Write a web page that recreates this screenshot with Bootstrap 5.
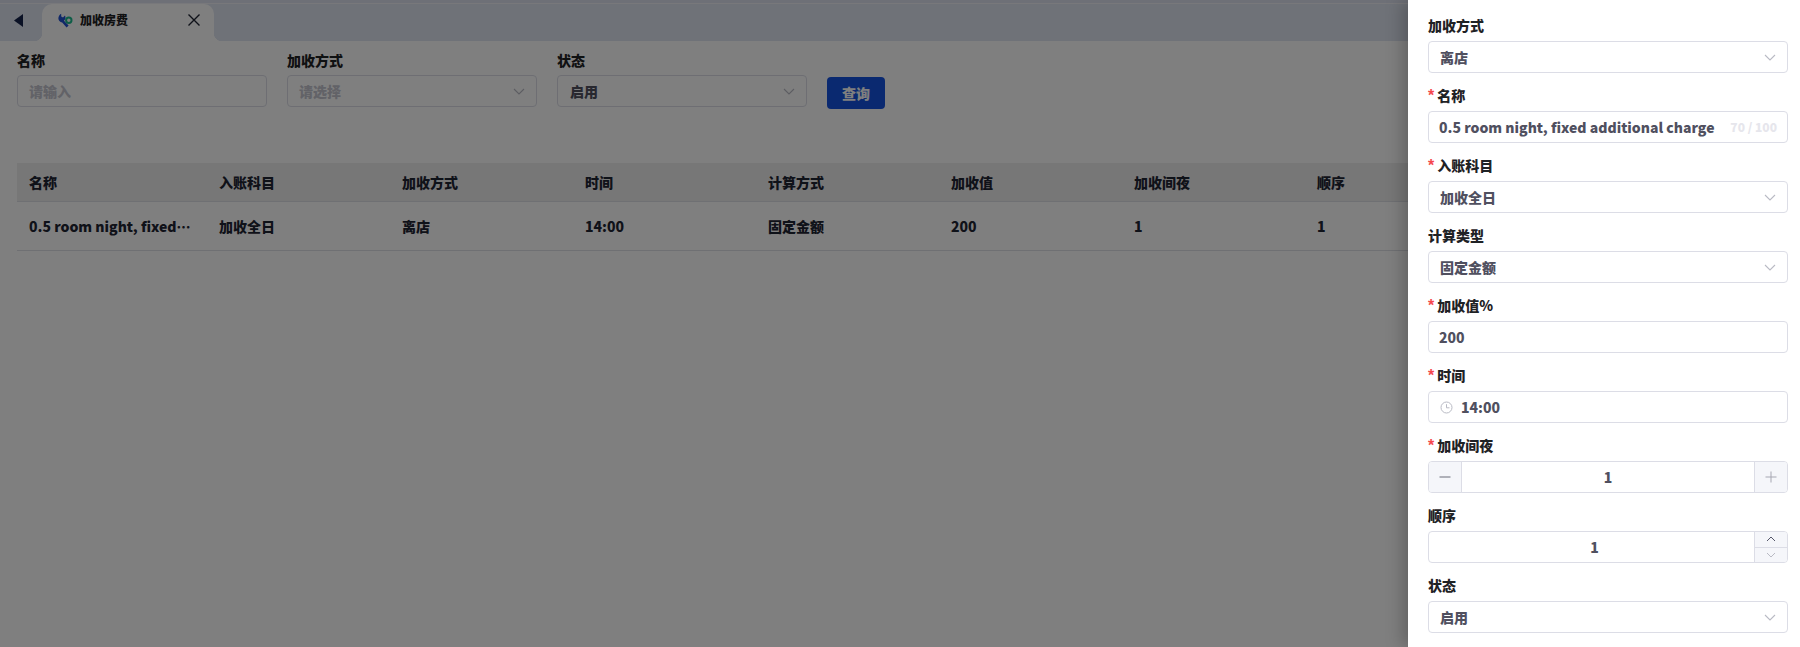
<!doctype html>
<html lang="zh-CN">
<head>
<meta charset="utf-8">
<title>加收房费</title>
<link rel="stylesheet" href="https://cdn.jsdelivr.net/npm/bootstrap@5.3.0/dist/css/bootstrap.min.css">
<style>
html,body{height:647px;overflow:hidden}
body{font-family:"Noto Sans CJK SC","Noto Sans",sans-serif;font-size:14px;font-weight:900;color:#1f2225;background:#fff}
.stage{position:relative;width:1800px;height:647px;overflow:hidden;background:#fff}
.tabstrip{height:3px;background:#dde1ee}
.tabbar{height:38px;background:#dfe4f1;border-top:1px solid #f0f1f6;padding-left:42px;position:relative}
.backicon{position:absolute;left:13px;top:10px}
.tabitem{width:172px;height:37px;background:#fff;border-radius:10px 10px 0 0;padding:0 13px 5px 16px;position:relative;font-size:12px;color:#1f2225}
.tabitem::before,.tabitem::after{content:"";position:absolute;bottom:0;width:8px;height:8px}
.tabitem::before{left:-8px;background:radial-gradient(circle at 0 0,transparent 8px,#fff 8.5px)}
.tabitem::after{right:-8px;background:radial-gradient(circle at 100% 0,transparent 8px,#fff 8.5px)}
.tabname{margin-left:7px}
.filterrow{padding:8px 17px 0;gap:20px}
.fcol{width:250px}
.flabel{height:22px;line-height:22px;margin-bottom:4px;font-size:14px}
.fbox{height:32px;border:1px solid #dcdde6;border-radius:4px;padding:0 11px;font-size:14px;line-height:20px;background:#fff}
.fbox.ph{color:#c4c5cf}
.fbox.val{color:#50505f;padding-left:12px}
.querybtn{width:58px;height:32px;margin-top:28px;padding:0;background:#1552e0;border:0;border-radius:4px;color:#fff;font-size:14px;font-weight:900;line-height:32px}
.datatable{width:1783px;margin:54px 0 0 17px;table-layout:fixed;border-collapse:collapse}
.datatable th,.datatable td{padding:0 12px;vertical-align:middle;font-size:14px;color:#1f2533;font-weight:900;border-bottom:1px solid #dfe0e6;background:#fff;box-shadow:none}
.datatable th{height:38px;background:#eeeeef;padding-top:1px}
.datatable td{height:49px;padding-top:2px}
.datatable td.firstcell{padding-right:14px}
.scrim{position:absolute;inset:0;background:rgba(0,0,0,.5)}
.sidepanel{position:absolute;top:0;right:0;bottom:0;width:392px;background:#fff;padding:15px 12px 0 20px;box-shadow:-6px 0 16px rgba(0,0,0,.22)}
.sfield{height:70px}
.slabel{height:21px;line-height:21px;margin-bottom:5px;font-size:14px;color:#1f2225;white-space:nowrap}
.reqmark{color:#f5484d;font-size:16px;line-height:1;margin-right:3px;font-family:"Liberation Sans",sans-serif}
.sbox{height:32px;border:1px solid #dcdde6;border-radius:4px;background:#fff;color:#50505f;font-size:14px;overflow:hidden}
.pad{padding:0 11px}
.inpad{padding:0 10px}
.cnt{color:#e6e6ec;font-size:12px}
.stepbtn{width:33px;background:#f5f6fa;height:100%}
.stepbtn.lft{border-right:1px solid #dcdde6}
.stepbtn.rgt{border-left:1px solid #dcdde6}
.stepcol{width:33px;border-left:1px solid #dcdde6;background:#f5f6fa;height:100%}
.stepcol>div{flex:1 1 0}
.stepcol>div:first-child{border-bottom:1px solid #dcdde6}
.numtxt{padding-left:6px}
</style>
</head>
<body>
<div class="stage">
  <div class="tabstrip"></div>
  <div class="tabbar d-flex">
    <svg class="backicon" width="10" height="13" viewBox="0 0 10 13"><path d="M10 0V13L1 6.500Z" fill="#14224a"/></svg>
    <div class="tabitem d-flex align-items-center">
      <svg width="15" height="15" viewBox="0 0 15 15" fill="none">
        <path d="M3.200.8V3.600L5 4.600 7 2.600C7.900 4.600 7.400 6.600 6 7.800L10.600 12.400 8.600 14.400 4.200 9.400C1.400 9.400-.3 6.400.6 4 1 2.600 2 1.400 3.200.8Z" fill="#2050d0"/>
        <circle cx="10.800" cy="7.300" r="2.700" stroke="#1dbb8e" stroke-width="2"/>
      </svg>
      <span class="tabname flex-grow-1">加收房费</span>
      <svg width="14" height="14" viewBox="0 0 14 14"><path d="M1.500 1.500 12.500 12.500M12.500 1.500 1.500 12.500" stroke="#1f2533" stroke-width="1.400"/></svg>
    </div>
  </div>

  <div class="filterrow d-flex">
    <div class="fcol"><div class="flabel">名称</div><div class="fbox ph d-flex align-items-center">请输入</div></div>
    <div class="fcol"><div class="flabel">加收方式</div><div class="fbox ph d-flex align-items-center justify-content-between">请选择
      <svg width="12" height="7" viewBox="0 0 12 7" fill="none"><path d="M1 1 6 6 11 1" stroke="#b9bac4" stroke-width="1.100"/></svg></div></div>
    <div class="fcol"><div class="flabel">状态</div><div class="fbox val d-flex align-items-center justify-content-between">启用
      <svg width="12" height="7" viewBox="0 0 12 7" fill="none"><path d="M1 1 6 6 11 1" stroke="#b9bac4" stroke-width="1.100"/></svg></div></div>
    <button type="button" class="btn querybtn">查询</button>
  </div>

  <table class="table datatable">
    <colgroup><col style="width:190px"><col style="width:183px"><col style="width:183px"><col style="width:183px"><col style="width:183px"><col style="width:183px"><col style="width:183px"><col style="width:183px"><col></colgroup>
    <thead><tr><th>名称</th><th>入账科目</th><th>加收方式</th><th>时间</th><th>计算方式</th><th>加收值</th><th>加收间夜</th><th>顺序</th><th></th></tr></thead>
    <tbody><tr><td class="text-truncate firstcell">0.5 room night, fixed additional charge</td><td>加收全日</td><td>离店</td><td>14:00</td><td>固定金额</td><td>200</td><td>1</td><td>1</td><td></td></tr></tbody>
  </table>

  <div class="scrim"></div>

  <aside class="sidepanel">
    <div class="sfield"><div class="slabel">加收方式</div><div class="sbox pad d-flex align-items-center justify-content-between">离店
      <svg width="12" height="7" viewBox="0 0 12 7" fill="none"><path d="M1 1 6 6 11 1" stroke="#b9bac4" stroke-width="1.100"/></svg></div></div>
    <div class="sfield"><div class="slabel"><span class="reqmark">*</span>名称</div><div class="sbox inpad d-flex align-items-center justify-content-between"><span>0.5 room night, fixed additional charge</span><span class="cnt">70 / 100</span></div></div>
    <div class="sfield"><div class="slabel"><span class="reqmark">*</span>入账科目</div><div class="sbox pad d-flex align-items-center justify-content-between">加收全日
      <svg width="12" height="7" viewBox="0 0 12 7" fill="none"><path d="M1 1 6 6 11 1" stroke="#b9bac4" stroke-width="1.100"/></svg></div></div>
    <div class="sfield"><div class="slabel">计算类型</div><div class="sbox pad d-flex align-items-center justify-content-between">固定金额
      <svg width="12" height="7" viewBox="0 0 12 7" fill="none"><path d="M1 1 6 6 11 1" stroke="#b9bac4" stroke-width="1.100"/></svg></div></div>
    <div class="sfield"><div class="slabel"><span class="reqmark">*</span>加收值%</div><div class="sbox inpad d-flex align-items-center">200</div></div>
    <div class="sfield"><div class="slabel"><span class="reqmark">*</span>时间</div><div class="sbox pad d-flex align-items-center gap-2">
      <svg width="13" height="13" viewBox="0 0 13 13" fill="none"><circle cx="6.500" cy="6.500" r="5.500" stroke="#b9bac4"/><path d="M6.500 3.200V6.800H9.500" stroke="#b9bac4"/></svg><span>14:00</span></div></div>
    <div class="sfield"><div class="slabel"><span class="reqmark">*</span>加收间夜</div><div class="sbox d-flex align-items-center">
      <div class="stepbtn lft d-flex align-items-center justify-content-center"><svg width="12" height="12" viewBox="0 0 12 12"><path d="M0.500 6H11.500" stroke="#6a6c78"/></svg></div>
      <div class="flex-grow-1 text-center">1</div>
      <div class="stepbtn rgt d-flex align-items-center justify-content-center"><svg width="12" height="12" viewBox="0 0 12 12"><path d="M0.500 6H11.500M6 .5V11.500" stroke="#a6a7b2"/></svg></div></div></div>
    <div class="sfield"><div class="slabel">顺序</div><div class="sbox d-flex align-items-center">
      <div class="flex-grow-1 text-center numtxt">1</div>
      <div class="stepcol d-flex flex-column">
        <div class="d-flex align-items-center justify-content-center"><svg width="10" height="6" viewBox="0 0 10 6" fill="none"><path d="M1 5 5 1 9 5" stroke="#55576a"/></svg></div>
        <div class="d-flex align-items-center justify-content-center"><svg width="10" height="6" viewBox="0 0 10 6" fill="none"><path d="M1 1 5 5 9 1" stroke="#b9bac4"/></svg></div>
      </div></div></div>
    <div class="sfield"><div class="slabel">状态</div><div class="sbox pad d-flex align-items-center justify-content-between">启用
      <svg width="12" height="7" viewBox="0 0 12 7" fill="none"><path d="M1 1 6 6 11 1" stroke="#b9bac4" stroke-width="1.100"/></svg></div></div>
  </aside>
</div>
</body>
</html>
